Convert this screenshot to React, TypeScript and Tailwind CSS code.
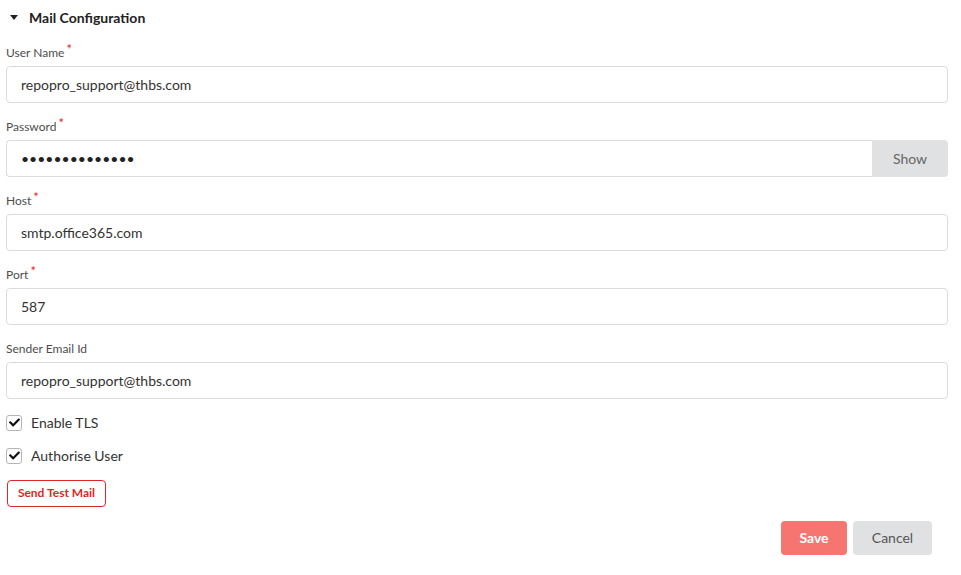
import { FaCheck } from 'react-icons/fa';

interface FieldProps {
  label: string;
  value: string;
  required?: boolean;
}

function Label({ label, required }: { label: string; required?: boolean }) {
  return (
    <div className="h-[14px] mb-[7px] text-[12px] leading-[16px] text-[#4d4d4d] flex">
      <span>{label}</span>
      {required && <span className="text-[#db2828] text-[13px] leading-[8px] ml-[2px]">*</span>}
    </div>
  );
}

function Field({ label, value, required }: FieldProps) {
  return (
    <div className="mb-[16px]">
      <Label label={label} required={required} />
      <input
        readOnly
        defaultValue={value}
        className="w-full h-[37px] border border-[#dcdcdd] rounded-[4px] px-[14px] text-[14px] text-[#333] outline-none bg-white"
      />
    </div>
  );
}

function CheckRow({ label }: { label: string }) {
  return (
    <div className="flex items-center h-[17px] gap-[9px]">
      <div className="w-[16px] h-[16px] border border-[#b5b5b5] rounded-[3px] flex items-center justify-center bg-white">
        <FaCheck size={11} className="text-[#111]" />
      </div>
      <span className="text-[14px] text-[#333]">{label}</span>
    </div>
  );
}

export default function App() {
  return (
    <div className="w-[961px] h-[575px] bg-white font-['Lato',sans-serif] pl-[6px] pr-[13px]">
      <div className="flex items-center h-[20px] mt-[7px] mb-[18px]">
        <svg width="8" height="5" viewBox="0 0 8 5" className="ml-[4px] mr-[11px]">
          <path d="M0 0 L8 0 L4 5 Z" fill="#222" />
        </svg>
        <span className="text-[14px] font-bold text-[#222]">Mail Configuration</span>
      </div>

      <Field label="User Name" value="repopro_support@thbs.com" required />

      <div className="mb-[16px]">
        <Label label="Password" required />
        <div className="flex h-[37px]">
          <input
            readOnly
            type="password"
            defaultValue="aaaaaaaaaaaaaa"
            className="flex-1 h-full border border-[#dcdcdd] border-r-0 rounded-l-[4px] px-[14px] text-[14px] text-[#222] outline-none"
          />
          <button className="w-[76px] h-full bg-[#e0e1e2] text-[#666] text-[14px] rounded-r-[4px]">
            Show
          </button>
        </div>
      </div>

      <Field label="Host" value="smtp.office365.com" required />
      <Field label="Port" value="587" required />
      <Field label="Sender Email Id" value="repopro_support@thbs.com" />

      <div className="flex flex-col gap-[16px] -mt-[1px]">
        <CheckRow label="Enable TLS" />
        <CheckRow label="Authorise User" />
      </div>

      <div className="mt-[15px] ml-[1px]">
        <button className="h-[27px] w-[99px] border border-[#db2828] rounded-[4px] text-[#db2828] text-[12px] font-bold">
          Send Test Mail
        </button>
      </div>

      <div className="flex justify-end gap-[6px] mt-[14px] pr-[16px]">
        <button className="w-[66px] h-[34px] bg-[#f67571] text-white text-[14px] font-bold rounded-[4px]">
          Save
        </button>
        <button className="w-[79px] h-[34px] bg-[#e0e1e2] text-[#555] text-[14px] rounded-[4px]">
          Cancel
        </button>
      </div>
    </div>
  );
}
